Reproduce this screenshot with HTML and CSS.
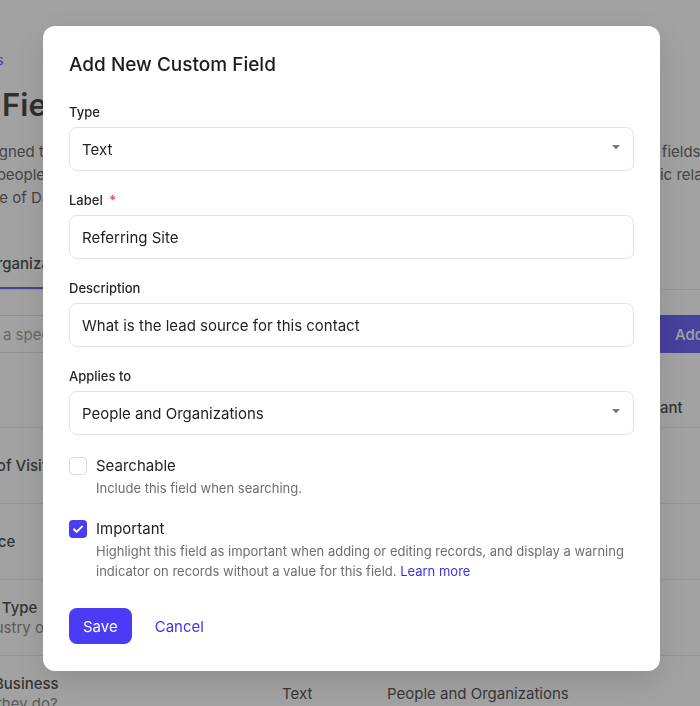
FILE: index.html
```html
<!DOCTYPE html>
<html lang="en">
<head>
<meta charset="utf-8">
<title>Custom Fields</title>
<link rel="stylesheet" href="styles.css">
</head>
<body>
<div class="page">
  <main class="content">
    <a class="crumb" href="#">&lsaquo; &lsaquo; Back to Settings</a>
    <h1 class="page-title">Custom Fields</h1>
    <p class="intro">Fields are all assigned to records so you can capture and manage the details that matter to your team. Custom fields<br>Track details for people and organizations, such as their size, industry, preferred contact method or any specific relationships<br>Make the best use of Data Fields with filters, reports, segments and more.</p>
    <nav class="tabs">
      <a class="tab" href="#">People</a>
      <a class="tab active" href="#">Organizations</a>
    </nav>
    <div class="toolbar">
      <div class="search">
        <svg class="search-icon" viewBox="0 0 16 16" width="16" height="16"><circle cx="7" cy="7" r="5" fill="none" stroke="#888" stroke-width="1.6"/><path d="M11 11l3.5 3.5" stroke="#888" stroke-width="1.6" stroke-linecap="round"/></svg>
        <span class="placeholder">Search for a specific field</span>
      </div>
      <button class="btn-add" type="button">Add Custom Field</button>
    </div>
    <div class="table">
      <div class="row head">
        <div>Name</div><div>Type</div><div>Applies to</div><div>Important</div>
      </div>
      <div class="row">
        <div class="name">Main Purpose of Visit</div><div>Text</div><div>People</div><div></div>
      </div>
      <div class="row">
        <div class="name">Referring Source</div><div>Dropdown</div><div>People and Organizations</div><div></div>
      </div>
      <div class="row">
        <div><div class="name">Organizational Type</div><div class="desc">Their main industry or sector</div></div><div>Dropdown</div><div>Organizations</div><div></div>
      </div>
      <div class="row">
        <div><div class="name">Main Lines of Business</div><div class="desc">What work do they do?</div></div><div>Text</div><div>People and Organizations</div><div></div>
      </div>
    </div>
  </main>
</div>

<div class="overlay">
  <div class="modal" role="dialog" aria-labelledby="modal-title">
    <h2 class="modal-title" id="modal-title">Add New Custom Field</h2>
    <div class="fields">
      <div class="field">
        <span class="field-label">Type</span>
        <div class="control select"><span>Text</span><svg class="caret" viewBox="0 0 8 5" width="8" height="5"><polygon points="0,0 8,0 4,4.5" fill="#7a7a7a"/></svg></div>
      </div>
      <div class="field">
        <span class="field-label">Label <span class="req">*</span></span>
        <input class="control" type="text" value="Referring Site">
      </div>
      <div class="field">
        <span class="field-label">Description</span>
        <input class="control" type="text" value="What is the lead source for this contact">
      </div>
      <div class="field">
        <span class="field-label">Applies to</span>
        <div class="control select"><span>People and Organizations</span><svg class="caret" viewBox="0 0 8 5" width="8" height="5"><polygon points="0,0 8,0 4,4.5" fill="#7a7a7a"/></svg></div>
      </div>
    </div>
    <div class="checks">
      <div class="check">
        <span class="box"></span>
        <div>
          <div class="check-title">Searchable</div>
          <div class="check-desc">Include this field when searching.</div>
        </div>
      </div>
      <div class="check">
        <span class="box checked"><svg viewBox="0 0 18 18" width="18" height="18"><path d="M5 9.3l2.6 2.6L13 6.6" fill="none" stroke="#fff" stroke-width="2" stroke-linecap="round" stroke-linejoin="round"/></svg></span>
        <div>
          <div class="check-title">Important</div>
          <div class="check-desc">Highlight this field as important when adding or editing records, and display a warning indicator on records without a value for this field. <a class="link" href="#">Learn more</a></div>
        </div>
      </div>
    </div>
    <div class="actions">
      <button class="btn-primary" type="button">Save</button>
      <button class="btn-link" type="button">Cancel</button>
    </div>
  </div>
</div>
</body>
</html>
```

FILE: styles.css
```css
html, body {
  margin: 0;
  height: 100%;
}

body {
  font-family: Inter, "Noto Sans", "Liberation Sans", sans-serif;
  color: #222;
  background: #fff;
  overflow: hidden;
}

/* ---------- background page ---------- */
.page {
  display: flex;
  justify-content: center;
}

.content {
  flex: 0 0 944px;
  width: 944px;
  padding-top: 50px;
}

.crumb {
  display: block;
  font-size: 14px;
  line-height: 20px;
  color: #4a3cf5;
  text-decoration: none;
  white-space: nowrap;
}

.page-title {
  margin: 15px 0 0;
  font-size: 31px;
  line-height: 40px;
  font-weight: 600;
  color: #1a1a1a;
}

.intro {
  margin: 15px 0 0;
  font-size: 15px;
  line-height: 23px;
  color: #444;
  white-space: nowrap;
}

.tabs {
  margin-top: 31px;
  display: flex;
  gap: 34px;
  border-bottom: 1px solid #e3e3e3;
}

.tab {
  padding: 12px 8px 11px;
  font-size: 15px;
  line-height: 24px;
  font-weight: 500;
  color: #333;
  text-decoration: none;
  border-bottom: 2px solid transparent;
}

.tab.active {
  border-bottom-color: #4a3cf5;
  color: #222;
}

.toolbar {
  margin-top: 25px;
  display: flex;
  gap: 12px;
  height: 38px;
}

.search {
  flex: 1;
  display: flex;
  align-items: center;
  gap: 16px;
  padding-left: 14px;
  border: 1px solid #ddd;
  border-radius: 6px;
  box-sizing: border-box;
}

.placeholder {
  font-size: 15px;
  color: #8a8a8a;
}

.btn-add {
  flex: 0 0 auto;
  padding: 0 20px;
  border: 0;
  border-radius: 6px;
  background: #4a3cf5;
  color: #fff;
  font: 500 15px Inter, "Noto Sans", sans-serif;
}

.table {
  margin-top: 35px;
}

.row {
  display: grid;
  grid-template-columns: 388px 105px 226px 1fr;
  align-items: center;
  min-height: 75px;
  padding-left: 16px;
  border-bottom: 1px solid #e3e3e3;
  font-size: 15px;
  line-height: 20px;
  color: #2a2a2a;
}

.row.head {
  min-height: 39px;
  font-weight: 500;
  color: #222;
}

.name {
  font-weight: 500;
  color: #222;
}

.desc {
  color: #6f6f6f;
}

/* ---------- modal ---------- */
.overlay {
  position: fixed;
  inset: 0;
  background: rgba(70, 70, 70, 0.5);
  display: flex;
  align-items: flex-start;
  padding: 26px 40px 0 43px;
}

.modal {
  flex: 1;
  background: #fff;
  border-radius: 12px;
  padding: 25px 26px 27px;
  box-shadow: 0 10px 30px rgba(0, 0, 0, 0.12);
}

.modal-title {
  margin: 0;
  font-size: 19px;
  line-height: 28px;
  font-weight: 500;
  color: #1c1c1c;
}

.fields {
  margin-top: 23px;
}

.field {
  margin-bottom: 19px;
}

.field-label {
  display: block;
  margin-bottom: 5px;
  font-size: 13px;
  line-height: 20px;
  font-weight: 500;
  color: #262626;
}

.req {
  color: #e5484d;
  margin-left: 3px;
}

.control {
  display: flex;
  align-items: center;
  justify-content: space-between;
  width: 100%;
  height: 44px;
  box-sizing: border-box;
  margin: 0;
  padding: 0 13px 0 12px;
  border: 1px solid #e4e4e4;
  border-radius: 8px;
  background: #fff;
  font: 400 15px Inter, "Noto Sans", sans-serif;
  color: #1f1f1f;
  outline: none;
}

.caret {
  display: block;
  margin-top: -3px;
}

.checks {
  margin-top: 2px;
}

.check {
  display: grid;
  grid-template-columns: 18px 1fr;
  column-gap: 9px;
}

.check + .check {
  margin-top: 19px;
}

.box {
  width: 18px;
  height: 18px;
  box-sizing: border-box;
  margin-top: 3px;
  border: 1px solid #dcdcdc;
  border-radius: 4px;
}

.box.checked {
  border: 0;
  background: #4a3cf5;
}

.box svg {
  display: block;
}

.check-title {
  font-size: 15px;
  line-height: 24px;
  color: #1f1f1f;
}

.check-desc {
  font-size: 13px;
  line-height: 20px;
  color: #6e6e6e;
}

.link {
  color: #3b30f0;
  text-decoration: none;
}

.actions {
  margin-top: 27px;
  display: flex;
  gap: 11px;
}

.btn-primary {
  height: 36px;
  padding: 0 14px;
  border: 0;
  border-radius: 8px;
  background: #4a3cf5;
  color: #fff;
  font: 400 15px Inter, "Noto Sans", sans-serif;
}

.btn-link {
  height: 36px;
  padding: 0 12px;
  border: 0;
  background: none;
  color: #4033f0;
  font: 400 15px Inter, "Noto Sans", sans-serif;
}
```
